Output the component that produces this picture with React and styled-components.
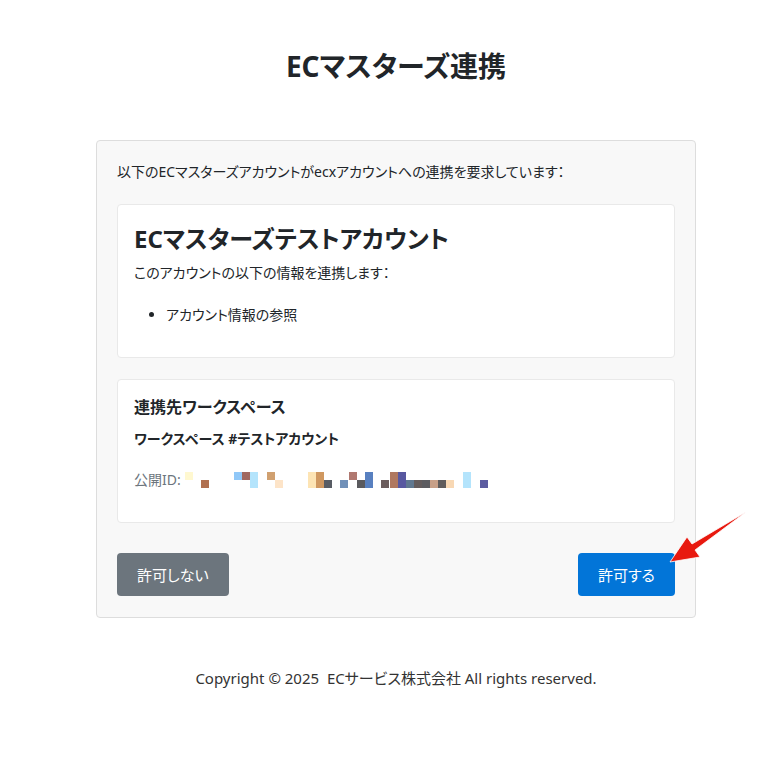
import React from 'react'
import styled, { createGlobalStyle } from 'styled-components'

const GlobalStyle = createGlobalStyle`
    body {
        margin: 0;
        background: #ffffff;
        color: #212529;
        font-family: "Noto Sans", "Noto Sans CJK JP", sans-serif;
        font-feature-settings: "palt";
    }
`
const Page = styled.div`
    position: relative;
    min-height: 769px;
    padding: 45px 0 0 24px;
    box-sizing: border-box;
`
const Container = styled.div`
    width: 600px;
    margin: 0 auto;
`
const Title = styled.h1`
    margin: 0 0 53px;
    font-size: 28px;
    line-height: 42px;
    font-weight: 700;
    text-align: center;
`
const Card = styled.div`
    background: #f8f8f8;
    border: 1px solid #dddddd;
    border-radius: 4px;
    padding: 20px 20px 21px;
`
const Lead = styled.p`
    margin: 0 0 22px;
    font-size: 14px;
    line-height: 21px;
`
const Panel = styled.div`
    background: #ffffff;
    border: 1px solid #e9e9e9;
    border-radius: 4px;
    padding: 16px;
    margin-bottom: 21px;
`
const AccountName = styled.h2`
    margin: 0 0 5px;
    font-size: 24px;
    line-height: 36px;
    font-weight: 700;
`
const SectionTitle = styled.h3`
    margin: 0 0 10px;
    font-size: 16px;
    line-height: 22px;
    font-weight: 700;
`
const Text = styled.p`
    margin: 0;
    font-size: 14px;
    line-height: 21px;
    font-weight: ${p => (p.$bold ? 700 : 400)};
    color: ${p => (p.$muted ? '#6c757d' : '#212529')};
`
const IdRow = styled(Text)`
    margin: 20px 0 16px;
    display: flex;
    align-items: center;
`
const List = styled.ul`
    margin: 21px 0 16px;
    padding-left: 32px;
    font-size: 14px;
    line-height: 21px;
`
const Actions = styled.div`
    display: flex;
    justify-content: space-between;
    margin-top: 30px;
`
const Button = styled.button`
    height: 43px;
    padding: 0 20px;
    border: none;
    border-radius: 4px;
    color: #ffffff;
    font-family: inherit;
    font-feature-settings: "palt";
    font-size: 15px;
    background: ${p => (p.$primary ? '#0275d8' : '#6c757d')};
    cursor: pointer;
`
const Footer = styled.p`
    margin: 50px 0 0;
    text-align: center;
    font-size: 15px;
    line-height: 21px;
    color: #333333;
`
const Arrow = styled.svg`
    position: absolute;
    left: 0;
    top: 0;
    pointer-events: none;
`

const mosaic = [
    [185, 0, '#fff8d0'], [201, 1, '#b07050'], [234, 0, '#90c8f8'], [242, 0, '#a06860'],
    [250, 0, '#b4e4fc'], [250, 1, '#b4e4fc'], [267, 0, '#d0a070'], [275, 1, '#fde4c8'],
    [308, 0, '#fde4b4'], [308, 1, '#fde4b4'], [316, 0, '#d09860'], [316, 1, '#d09860'],
    [324, 1, '#585c64'], [340, 1, '#7090b8'], [349, 0, '#b07870'], [357, 1, '#5a5a5e'],
    [365, 0, '#5880c0'], [365, 1, '#5880c0'], [381, 1, '#6a5c5c'], [390, 0, '#b07860'],
    [390, 1, '#b07860'], [398, 0, '#5858a0'], [398, 1, '#5858a0'], [406, 1, '#607890'],
    [414, 1, '#645c5c'], [422, 1, '#5c5c60'], [430, 1, '#c8a088'], [438, 1, '#605c5c'],
    [446, 1, '#f8d8b4'], [463, 0, '#b4e4fc'], [463, 1, '#b4e4fc'], [480, 1, '#5c5ca0'],
]

const Mosaic = () => (
    <svg width="304" height="16" viewBox="0 0 304 16" style={{ marginLeft: 4 }}>
        {mosaic.map(([x, r, c], i) => (
            <rect key={i} x={x - 185} y={r * 8} width="8" height="8" fill={c} />
        ))}
    </svg>
)

const App = () => {
    return (
        <Page>
            <GlobalStyle />
            <Container>
                <Title>ECマスターズ連携</Title>
                <Card>
                    <Lead>以下のECマスターズアカウントがecxアカウントへの連携を要求しています：</Lead>
                    <Panel>
                        <AccountName>ECマスターズテストアカウント</AccountName>
                        <Text>このアカウントの以下の情報を連携します：</Text>
                        <List>
                            <li>アカウント情報の参照</li>
                        </List>
                    </Panel>
                    <Panel>
                        <SectionTitle>連携先ワークスペース</SectionTitle>
                        <Text $bold>ワークスペース #テストアカウント</Text>
                        <IdRow $muted>公開ID:<Mosaic /></IdRow>
                    </Panel>
                    <Actions>
                        <Button>許可しない</Button>
                        <Button $primary>許可する</Button>
                    </Actions>
                </Card>
                <Footer>Copyright © 2025&nbsp; ECサービス株式会社 All rights reserved.</Footer>
            </Container>
            <Arrow width="768" height="769" viewBox="0 0 768 769">
                <polygon
                    points="670,562 687,537 692,544 746,512 695,550 700,557"
                    fill="#e8190f"
                    stroke="#ffffff"
                    strokeWidth="0.8"
                    strokeLinejoin="round"
                />
            </Arrow>
        </Page>
    )
}

export default App
